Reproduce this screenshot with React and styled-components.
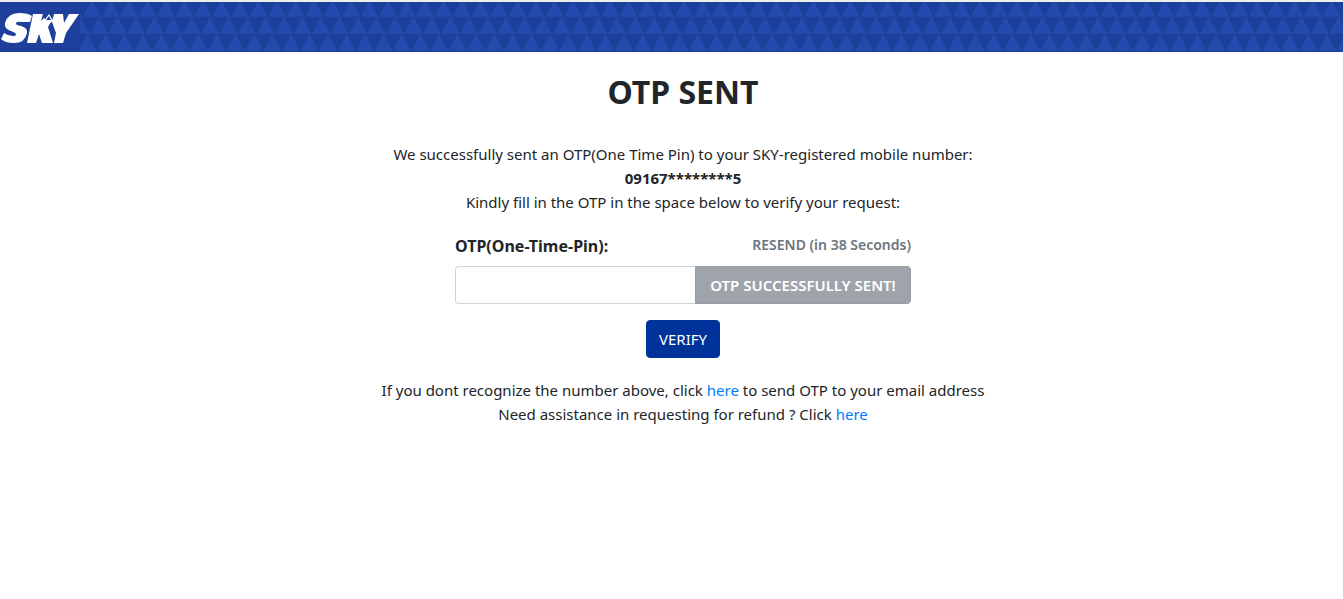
import React from "react";
import styled, { createGlobalStyle } from "styled-components";

const GlobalStyle = createGlobalStyle`
  *, *::before, *::after { box-sizing: border-box; }
  body {
    margin: 0;
    background: #fff;
    color: #212529;
    font-family: "Noto Sans", "Open Sans", sans-serif;
    font-size: 15px;
    line-height: 24px;
  }
`;

const Header = styled.header`
  display: flex;
  height: 52px;
  border-top: 2px solid #f1efee;
  background: #1e3f9c;
`;

const Pattern = styled.svg`
  flex: 1;
  min-width: 0;
  height: 50px;
`;

const Logo = styled.svg`
  flex: none;
  width: 80px;
  height: 50px;
`;

const Main = styled.main`
  display: flex;
  flex-direction: column;
  align-items: center;
  padding: 20px 0 0 23px;
  text-align: center;
`;

const Title = styled.h1`
  margin: 0;
  font-size: 32px;
  line-height: 40px;
  font-weight: 700;
`;

const Message = styled.p`
  margin: 0;
`;

const Intro = styled.section`
  padding-top: 30px;
`;

const Form = styled.form`
  display: flex;
  flex-direction: column;
  align-items: center;
  width: 456px;
  max-width: 100%;
  padding: 20px 0;
`;

const LabelRow = styled.div`
  display: flex;
  justify-content: space-between;
  width: 100%;
  margin-bottom: 8px;
`;

const Label = styled.label`
  font-size: 16px;
  font-weight: 700;
`;

const Countdown = styled.span`
  color: #6c757d;
  font-size: 14px;
  line-height: 22px;
  font-weight: 600;
`;

const InputGroup = styled.div`
  display: flex;
  width: 100%;
  margin-bottom: 16px;
`;

const Input = styled.input`
  flex: 1;
  min-width: 0;
  height: 38px;
  padding: 6px 12px;
  border: 1px solid #ced4da;
  border-right: 0;
  border-radius: 4px 0 0 4px;
  font: inherit;
  color: #495057;
`;

const Button = styled.button`
  height: 38px;
  padding: 0 12px;
  border: 1px solid #003399;
  border-radius: 4px;
  background: #003399;
  color: #fff;
  font: inherit;
`;

const SentButton = styled(Button)`
  width: 216px;
  padding: 0;
  border-color: #989da3;
  border-radius: 0 4px 4px 0;
  background: #9fa4aa;
  font-weight: 600;
`;

const Link = styled.a`
  color: #007bff;
  text-decoration: none;
`;

function SkyLogo() {
  return (
    <Logo viewBox="0 0 80 50" role="img" aria-label="SKY">
      <g fill="#fff">
        <path d="M30 20H21Q16 19 16 21.500Q16 23 21 24Q28 26 27 31Q25 41 14 41Q5 41 1 37L4 31Q8 34 13 34Q16 34 16 32Q16 31 11 29Q4 27 5 21Q8 11 19 11Q28 11 32 14Z" />
        <path d="M33 12H43L41 19L44 16L49 20L51 20L48 25L53 41H42L39 32L36 41H27Z" />
        <path d="M54 12H63L64 21L69 12H79L66 31L63 41H54L56 31L52 20Z" />
        <path d="M49 12L54 20H43Z" />
      </g>
      <path d="M49 14L51 18H46Z" fill="#1e3f9c" />
    </Logo>
  );
}

export default function App() {
  return (
    <>
      <GlobalStyle />
      <Header>
        <SkyLogo />
        <Pattern aria-hidden="true">
          <defs>
            <pattern id="triangles" width="18.5" height="50" patternUnits="userSpaceOnUse">
              <rect width="19" height="50" fill="#1c3f9a" />
              <path
                d="M2.8 15L12 -2L21.3 15ZM-15.7 15L-6.5 -2L2.8 15ZM-8.7 32L.5 15L9.8 32ZM9.8 32L19 15L28.3 32ZM-1.7 49L7.5 32L16.8 49ZM16.8 49L26 32L35.3 49ZM-20.200 49L-11 32L-1.700 49Z"
                fill="#224bad"
              />
              <path d="M0 15H19M0 32H19M0 49H19" stroke="#1c409c" strokeOpacity=".5" />
            </pattern>
          </defs>
          <rect width="100%" height="100%" fill="url(#triangles)" />
        </Pattern>
      </Header>
      <Main>
        <Title>OTP SENT</Title>
        <Intro>
          <Message>We successfully sent an OTP(One Time Pin) to your SKY-registered mobile number:</Message>
          <Message><b>09167********5</b></Message>
          <Message>Kindly fill in the OTP in the space below to verify your request:</Message>
        </Intro>
        <Form onSubmit={(event) => event.preventDefault()}>
          <LabelRow>
            <Label htmlFor="otp">OTP(One-Time-Pin):</Label>
            <Countdown>RESEND (in 38 Seconds)</Countdown>
          </LabelRow>
          <InputGroup>
            <Input id="otp" type="text" />
            <SentButton type="button" disabled>OTP SUCCESSFULLY SENT!</SentButton>
          </InputGroup>
          <Button type="submit">VERIFY</Button>
        </Form>
        <section>
          <Message>If you dont recognize the number above, click <Link href="#email">here</Link> to send OTP to your email address</Message>
          <Message>Need assistance in requesting for refund ? Click <Link href="#help">here</Link></Message>
        </section>
      </Main>
    </>
  );
}
